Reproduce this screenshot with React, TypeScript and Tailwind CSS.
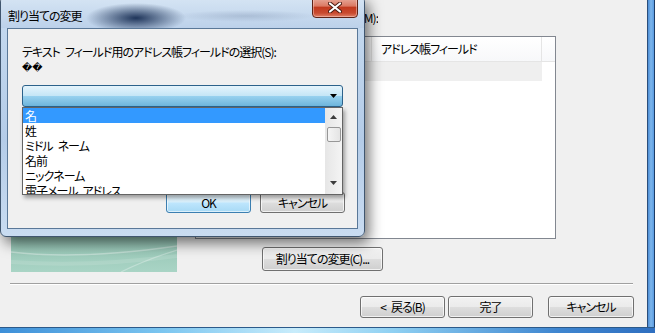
import React from "react";

const items = ["名", "姓", "ミドル\u2002ネーム", "名前", "ニックネーム", "電子メール\u2002アドレス"];

const Btn = ({ children, className }: { children: React.ReactNode; className: string }) => (
  <div
    className={`flex items-center justify-center rounded-[3px] border border-[#707070] bg-[linear-gradient(180deg,#f2f2f2_0%,#ebebeb_48%,#dddddd_52%,#cfcfcf_100%)] shadow-[inset_0_0_0_1px_rgba(255,255,255,0.7)] ${className}`}
  >
    {children}
  </div>
);

const App = () => {
  return (
    <div className="relative w-[655px] h-[333px] overflow-hidden bg-[#f0f0f0] text-[12px] leading-[14px] tracking-[-1px] text-black font-['Noto_Sans_CJK_JP',sans-serif] [font-feature-settings:'palt']">
      {/* Wizard window behind */}
      <div className="flex flex-col h-full">
        <div className="flex flex-1">
          <div className="flex flex-col w-[647px]">
            <div className="flex h-[277px]">
              {/* Side image */}
              <div className="ml-[11px] w-[166px] h-[272px] overflow-hidden bg-[linear-gradient(180deg,#4f8072_0%,#86b9a8_80%,#a9d4c5_100%)]">
                <svg width="166" height="272" viewBox="0 0 166 272">
                  <path d="M0 252 C50 258 110 254 166 246" stroke="#ffffff" strokeOpacity="0.35" strokeWidth="1.5" fill="none" />
                  <path d="M110 272 C130 262 150 255 166 250" stroke="#ffffff" strokeOpacity="0.3" strokeWidth="1.2" fill="none" />
                  <path d="M0 262 C60 266 120 262 166 256" stroke="#ffffff" strokeOpacity="0.12" strokeWidth="4" fill="none" />
                </svg>
              </div>
              {/* Right column */}
              <div className="ml-[18px] w-[361px] flex flex-col">
                <div className="mt-[11px] h-[14px] w-[183px] flex justify-end overflow-hidden whitespace-nowrap">
                  <span>テキスト{"\u2002"}フィールドとアドレス帳フィールドの対応付け(M):</span>
                </div>
                <div className="mt-[11px] h-[203px] border border-[#828790] bg-white flex flex-col">
                  <div className="flex h-[25px] border-b border-[#e5e5e5] bg-[linear-gradient(180deg,#ffffff_0%,#f7f8fa_100%)]">
                    <div className="w-[176px] border-r border-[#e5e5e5]" />
                    <div className="w-[170px] border-r border-[#e5e5e5] pl-[9px] flex items-center">アドレス帳フィールド</div>
                  </div>
                  <div className="w-[346px] h-[19px] bg-[#efefef]" />
                </div>
                <Btn className="mt-[8px] ml-[67px] w-[121px] h-[24px]">割り当ての変更(C)...</Btn>
              </div>
            </div>
            {/* Separator */}
            <div className="mt-[6px] ml-[10px] w-[623px] h-[2px] border-t border-[#a0a0a0] border-b border-b-white" />
            {/* Wizard buttons */}
            <div className="mt-[11px] flex justify-end pr-[13px]">
              <Btn className="w-[85px] h-[22px]">&lt;{"\u2002"}戻る(B)</Btn>
              <Btn className="ml-[3px] w-[85px] h-[22px]">完了</Btn>
              <Btn className="ml-[15px] w-[86px] h-[22px]">キャンセル</Btn>
            </div>
          </div>
          <div className="w-[8px] border-l border-[#2a4d7a] border-r border-r-[#1d3c66] bg-[linear-gradient(90deg,#4d8ed6,#7db6ec,#5a9be0)]" />
        </div>
        <div className="h-[6px] border-t border-[#2c5a8a] bg-[linear-gradient(90deg,#3d8fd8_0%,#7cc6f0_25%,#c8ecfb_45%,#8fd0f2_60%,#3f86d0_85%,#2f6fc0_100%)]" />
      </div>

      {/* Dialog: 割り当ての変更 */}
      <div className="absolute left-0 top-[-4px] w-[365px] h-[241px] rounded-[6px] border border-[#40566f] bg-[linear-gradient(180deg,#c7dbf0_0%,#b4cce8_60%,#c9dcf1_100%)] shadow-[4px_6px_14px_rgba(0,0,0,0.55)] flex flex-col">
        <div className="relative h-[31px] pt-[6px] pl-[7px] flex items-center rounded-t-[5px] bg-[radial-gradient(ellipse_50px_15px_at_135px_21px,rgba(22,44,82,0.95),rgba(22,44,82,0)),radial-gradient(ellipse_70px_6px_at_245px_19px,rgba(120,140,170,0.35),rgba(120,140,170,0)),linear-gradient(180deg,#d6e5f4,#bcd1ea)]">
          <span className="text-[12px] text-black">割り当ての変更</span>
          {/* Close button */}
          <div className="absolute right-[6px] top-[-1px] w-[46px] h-[22px] rounded-b-[4px] border border-[#5e2317] bg-[linear-gradient(180deg,#eab2a4_0%,#db7a64_45%,#c23a1f_52%,#c84a2f_80%,#df8068_100%)] shadow-[inset_0_0_0_1px_rgba(255,220,210,0.45)] flex items-center justify-center">
            <svg width="14" height="11" viewBox="0 0 14 11">
              <path d="M2 1.5 L12 9.5 M12 1.5 L2 9.5" stroke="#4a1a10" strokeWidth="4" strokeLinecap="round" />
              <path d="M2 1.5 L12 9.5 M12 1.5 L2 9.5" stroke="#ffffff" strokeWidth="2.2" strokeLinecap="round" />
            </svg>
          </div>
        </div>
        <div className="relative ml-[6px] w-[351px] h-[201px] border border-[#5a7898] bg-[#f0f0f0] flex flex-col">
          <div className="mt-[16px] ml-[14px]">テキスト{"\u2002"}フィールド用のアドレス帳フィールドの選択(S):</div>
          <div className="mt-[2px] ml-[14px] h-[14px] text-[10px] leading-[14px] tracking-normal font-['DejaVu_Sans',sans-serif]">{"\uFFFD\uFFFD"}</div>
          {/* Combobox */}
          <div className="mt-[10px] ml-[14px] w-[321px] h-[22px] rounded-[3px] border border-[#2c628b] bg-[linear-gradient(180deg,#e5f4fc_0%,#c4e5f6_50%,#98d1ef_51%,#6db5dc_100%)] flex items-center justify-end pr-[5px]">
            <svg width="7" height="4" viewBox="0 0 7 4">
              <path d="M0 0 L7 0 L3.5 4 Z" fill="#000" />
            </svg>
          </div>
          {/* Dialog buttons */}
          <div className="mt-[85px] flex justify-end pr-[12px] gap-[9px]">
            <div className="w-[85px] h-[21px] rounded-[3px] border border-[#3c7fb1] bg-[linear-gradient(180deg,#eaf6fd_0%,#d9f0fc_48%,#bee6fd_52%,#a7d9f5_100%)] shadow-[inset_0_0_0_1px_rgba(255,255,255,0.6)] flex items-center justify-center">OK</div>
            <Btn className="w-[85px] h-[21px]">キャンセル</Btn>
          </div>
          {/* Dropdown list */}
          <div className="absolute left-[14px] top-[78px] w-[321px] h-[88px] border border-[#646464] bg-white shadow-[2px_3px_4px_rgba(0,0,0,0.35)] flex overflow-hidden">
            <div className="flex-1 flex flex-col">
              {items.map((it, i) => (
                <div
                  key={it}
                  className={i === 0 ? "h-[15px] shrink-0 pl-[2px] leading-[15px] bg-[#3399ff] text-white" : "h-[15px] shrink-0 pl-[2px] leading-[15px]"}
                >
                  {it}
                </div>
              ))}
            </div>
            <div className="w-[17px] bg-[linear-gradient(90deg,#e6e6e6,#f4f4f4)] flex flex-col items-center">
              <svg className="mt-[7px]" width="7" height="4" viewBox="0 0 7 4">
                <path d="M0 4 L7 4 L3.5 0 Z" fill="#3c3c3c" />
              </svg>
              <div className="mt-[8px] w-[14px] h-[15px] rounded-[2px] border border-[#979797] bg-[linear-gradient(90deg,#f5f5f5,#e4e4e4)]" />
              <svg className="mt-[39px]" width="7" height="4" viewBox="0 0 7 4">
                <path d="M0 0 L7 0 L3.5 4 Z" fill="#3c3c3c" />
              </svg>
            </div>
          </div>
        </div>
      </div>
    </div>
  );
};

export default App;
